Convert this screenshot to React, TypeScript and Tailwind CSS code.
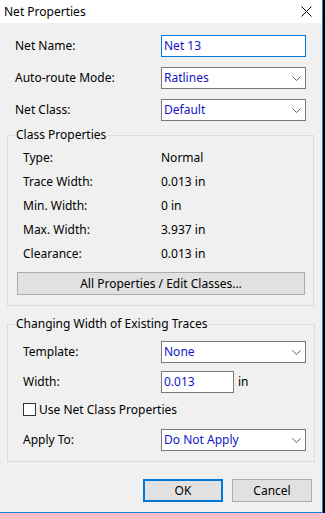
import React from 'react';

const font = { fontFamily: '"Noto Sans", "Liberation Sans", sans-serif' };

function Chevron() {
  return (
    <svg width="9" height="5" viewBox="0 0 9 5" className="shrink-0">
      <path d="M0.5 0.5 L4.5 4.5 L8.5 0.5" fill="none" stroke="#606060" strokeWidth="1" />
    </svg>
  );
}

function Select({ value, width = 'w-[145px]' }: { value: string; width?: string }) {
  return (
    <div
      className={`${width} h-[22px] shrink-0 flex items-center justify-between border border-[#7a7a7a] bg-white pl-[2px] pr-[4px]`}
    >
      <span className="text-[#1414c8] leading-[16px]">{value}</span>
      <Chevron />
    </div>
  );
}

function TextBox({ value, width, focused }: { value: string; width: string; focused?: boolean }) {
  return (
    <div
      className={`${width} h-[22px] shrink-0 flex items-center border ${
        focused ? 'border-[#0078d7]' : 'border-[#7a7a7a]'
      } bg-white pl-[2px]`}
    >
      <span className="text-[#1414c8] leading-[16px]">{value}</span>
    </div>
  );
}

function InfoRow({ label, value }: { label: string; value: string }) {
  return (
    <div className="h-[24px] flex items-center">
      <span className="w-[138px]">{label}</span>
      <span>{value}</span>
    </div>
  );
}

function TopRow({ label, children, className = '' }: { label: string; children: React.ReactNode; className?: string }) {
  return (
    <div className={`flex items-center pl-[15px] ${className}`}>
      <span className="w-[146px]">{label}</span>
      {children}
    </div>
  );
}

export default function App() {
  return (
    <div className="w-[325px] h-[513px] flex bg-black text-[12px] leading-[16px] text-black" style={font}>
      <div className="w-[323px] h-[513px] flex flex-col bg-[#f0f0f0] border-r border-b border-[#1883d7]">
        {/* title bar */}
        <div className="h-[23px] bg-white flex items-center justify-between pl-[4px] pr-[10px]">
          <span className="leading-[16px]">Net Properties</span>
          <svg width="11" height="11" viewBox="0 0 11 11">
            <path d="M0.5 0.5 L10.5 10.5 M10.5 0.5 L0.5 10.5" stroke="#000" strokeWidth="1" />
          </svg>
        </div>

        <TopRow label="Net Name:" className="mt-[12px]">
          <TextBox value="Net 13" width="w-[145px]" focused />
        </TopRow>
        <TopRow label="Auto-route Mode:" className="mt-[10px]">
          <Select value="Ratlines" />
        </TopRow>
        <TopRow label="Net Class:" className="mt-[10px]">
          <Select value="Default" />
        </TopRow>

        {/* Class Properties */}
        <fieldset className="mt-[6px] ml-[7px] w-[307px] border border-[#dcdcdc] pl-[15px] pr-[8px] pt-[3px] pb-[10px]">
          <legend className="ml-[-8px] px-[1px] leading-[16px]">Class Properties</legend>
          <InfoRow label="Type:" value="Normal" />
          <InfoRow label="Trace Width:" value="0.013 in" />
          <InfoRow label="Min. Width:" value="0 in" />
          <InfoRow label="Max. Width:" value="3.937 in" />
          <InfoRow label="Clearance:" value="0.013 in" />
          <div className="mt-[6px] ml-[-6px] h-[23px] w-[288px] flex items-center justify-center bg-[#e1e1e1] border border-[#adadad]">
            All Properties / Edit Classes...
          </div>
        </fieldset>

        {/* Changing Width */}
        <fieldset className="mt-[10px] ml-[7px] w-[307px] border border-[#dcdcdc] pl-[15px] pr-[8px] pt-[9px] pb-[10px]">
          <legend className="ml-[-8px] px-[1px] leading-[16px]">Changing Width of Existing Traces</legend>
          <div className="flex items-center">
            <span className="w-[138px]">Template:</span>
            <Select value="None" />
          </div>
          <div className="mt-[8px] flex items-center">
            <span className="w-[138px]">Width:</span>
            <TextBox value="0.013" width="w-[73px]" />
            <span className="ml-[4px]">in</span>
          </div>
          <div className="mt-[10px] h-[13px] flex items-center">
            <div className="w-[13px] h-[13px] border border-[#333333] bg-white shrink-0" />
            <span className="ml-[3px]">Use Net Class Properties</span>
          </div>
          <div className="mt-[13px] flex items-center">
            <span className="w-[138px]">Apply To:</span>
            <Select value="Do Not Apply" />
          </div>
        </fieldset>

        {/* buttons */}
        <div className="mt-[17px] flex justify-end gap-[9px] pr-[10px]">
          <div className="w-[80px] h-[23px] flex items-center justify-center bg-[#e1e1e1] border-2 border-[#0078d7]">
            OK
          </div>
          <div className="w-[80px] h-[23px] flex items-center justify-center bg-[#e1e1e1] border border-[#adadad]">
            Cancel
          </div>
        </div>
      </div>
    </div>
  );
}
